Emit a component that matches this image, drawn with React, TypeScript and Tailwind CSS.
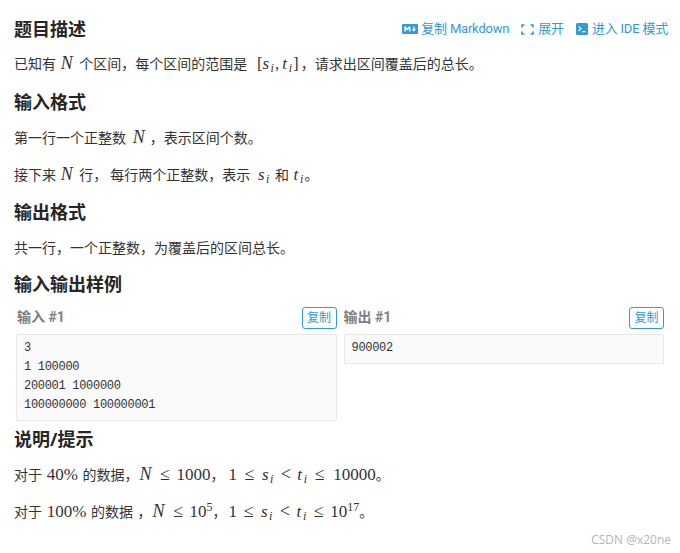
import React from 'react';
import { FaMarkdown } from 'react-icons/fa';

const cjk = "font-['Open_Sans','Noto_Sans_CJK_SC',sans-serif]";

function M({ children, className = '' }: { children: React.ReactNode; className?: string }) {
  return <span className={`font-['Liberation_Serif',serif] text-[17px] leading-none ${className}`}>{children}</span>;
}

// italic variable, the box width stands in for the wider math font of the original
function V({ c, sub, className = '' }: { c: string; sub?: string; className?: string }) {
  const width = c === 'N' ? 'w-[14px] text-[18px]' : c === 's' ? 'w-[8px]' : 'w-[6.5px]';
  return (
    <M className={`italic ${className}`}>
      <span className={`inline-block ${width}`}>{c}</span>
      {sub && <sub className="text-[12px] align-[-3px] bottom-0 leading-none mr-[1px]">{sub}</sub>}
    </M>
  );
}

function Rel({ c }: { c: string }) {
  return (
    <M className="inline-block w-[12px] mx-[5.5px] text-center text-[18px] text-[#333333]">{c}</M>
  );
}

function Pow({ n }: { n: string }) {
  return <sup className="text-[12px] align-[6px] top-0 leading-none">{n}</sup>;
}

function Heading({ children, className = '' }: { children: React.ReactNode; className?: string }) {
  return <h2 className={`text-[18px] leading-[24px] font-bold text-[#262626] ${className}`}>{children}</h2>;
}

function Para({ children, className = '' }: { children: React.ReactNode; className?: string }) {
  return <p className={`text-[14px] leading-[22px] h-[22px] text-[#333333] [word-spacing:1px] ${className}`}>{children}</p>;
}

function Sample({ title, lines, titleClass = '' }: { title: string; lines: string[]; titleClass?: string }) {
  return (
    <div className="flex-1 min-w-0">
      <div className="flex justify-between items-start h-[28px]">
        <span className={`text-[14px] leading-[18px] mt-[2px] font-bold text-[#7f7f7f] font-['Roboto','Noto_Sans_CJK_SC',sans-serif] ${titleClass}`}>{title}</span>
        <button className="w-[35px] h-[22px] mt-[1px] border border-[#3498db] rounded-[3px] text-[12px] leading-[18px] text-[#3498db] bg-white">
          复制
        </button>
      </div>
      <pre className="bg-[#fafafa] border border-[#e8e8e8] rounded-[2px] pl-[7px] pr-[7px] pt-[3.5px] pb-[5.5px] text-[12px] tracking-[-0.3px] leading-[19px] text-[#333333] font-['Liberation_Mono','DejaVu_Sans_Mono',monospace]">
        {lines.join('\n')}
      </pre>
    </div>
  );
}

export default function App() {
  return (
    <div className={`w-[680px] h-[553px] overflow-hidden relative bg-white pl-[14px] pr-[12px] pt-[17px] ${cjk}`}>
      <div className="flex justify-between items-center">
        <Heading>题目描述</Heading>
        <div className="flex items-center text-[13px] text-[#3498db] tracking-[-0.2px] font-['Roboto','Noto_Sans_CJK_SC',sans-serif]">
          <FaMarkdown className="text-[#3498db] mr-[3px]" size={16} />
          <span>复制 Markdown</span>
          <svg className="ml-[12px] mr-[4px]" width="13" height="11" viewBox="0 0 13 11" fill="none" stroke="#3498db" strokeWidth="1.7">
            <path d="M3.5 1H1v2.5M9.5 1H12v2.5M3.5 10H1V7.5M9.5 10H12V7.5" />
          </svg>
          <span>展开</span>
          <svg className="ml-[12px] mr-[4px]" width="12" height="12" viewBox="0 0 12 12">
            <rect width="12" height="12" rx="1.5" fill="#3498db" />
            <path d="M2.5 3.5 5 5.7 2.5 8M6 8.6h3.5" fill="none" stroke="#fff" strokeWidth="1.1" />
          </svg>
          <span>进入 IDE 模式</span>
        </div>
      </div>

      <Para className="mt-[12px]">
        已知有 <V c="N" /> 个区间，每个区间的范围是 <M className="ml-[5px]">[</M>
        <V c="s" sub="i" />
        <M className="mr-[3px]">,</M>
        <V c="t" sub="i" />
        <M className="mr-[2px]">]</M>，请求出区间覆盖后的总长。
      </Para>

      <Heading className="mt-[15px]">输入格式</Heading>
      <Para className="mt-[13px]">
        第一行一个正整数 <V c="N" className="ml-[2px] mr-[3px]" />，表示区间个数。
      </Para>
      <Para className="mt-[15px]">
        接下来 <V c="N" /> <span className="mr-[3px]">行，</span>每行两个正整数，表示 <V c="s" sub="i" className="ml-[3px]" /> 和 <V c="t" sub="i" />。
      </Para>

      <Heading className="mt-[14px]">输出格式</Heading>
      <Para className="mt-[13px]">共一行，一个正整数，为覆盖后的区间总长。</Para>

      <Heading className="mt-[13px]">输入输出样例</Heading>

      <div className="flex gap-[7px] mt-[10px] pl-[2px] pr-[4px] items-start">
        <Sample title="输入 #1" titleClass="ml-[1px]" lines={['3', '1 100000', '200001 1000000', '100000000 100000001']} />
        <Sample title="输出 #1" lines={['900002']} />
      </div>

      <Heading className="mt-[6px]">说明/提示</Heading>
      <Para className="mt-[13px]">
        对于 <M>40%</M> 的数据，<V c="N" className="ml-[1px]" />
        <Rel c="≤" />
        <M>1000</M>，<M className="ml-[4px] mr-[1px]">1</M>
        <Rel c="≤" />
        <V c="s" sub="i" className="ml-[1px]" />
        <Rel c="<" />
        <V c="t" sub="i" />
        <Rel c="≤" />
        <M className="ml-[2px]">10000</M>。
      </Para>
      <Para className="mt-[15px]">
        对于 <M>100%</M> 的数据 ，<V c="N" className="ml-[1px]" />
        <Rel c="≤" />
        <M>10<Pow n="5" /></M>，<M className="ml-[2px]">1</M>
        <Rel c="≤" />
        <V c="s" sub="i" className="ml-[1px]" />
        <Rel c="<" />
        <V c="t" sub="i" />
        <Rel c="≤" />
        <M>10<Pow n="17" /></M>。
      </Para>

      <div className="absolute right-[9px] bottom-[5px] text-[12px] leading-[16px] text-[#b5b5b5]">CSDN @x20ne</div>
    </div>
  );
}
